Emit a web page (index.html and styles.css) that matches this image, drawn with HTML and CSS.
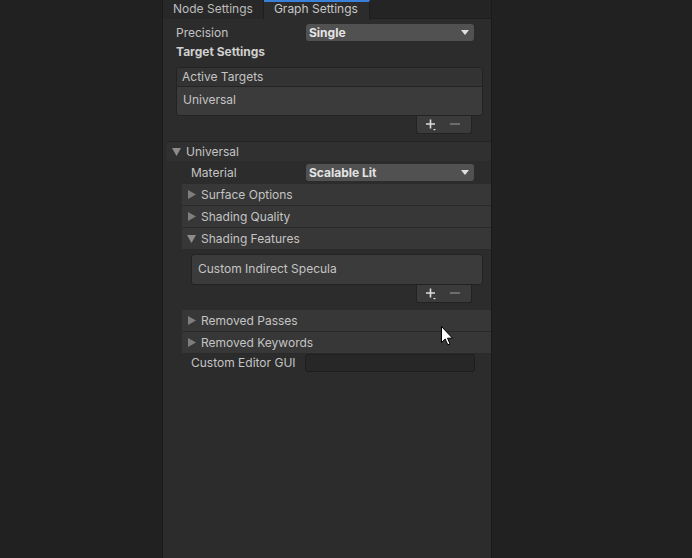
FILE: index.html
```html
<!DOCTYPE html>
<html>
<head>
<meta charset="utf-8">
<link rel="stylesheet" href="styles.css">
</head>
<body>
<div class="window">
  <div class="tabbar">
    <div class="tab">Node Settings</div>
    <div class="tab active">Graph Settings</div>
  </div>
  <div class="content">
    <div class="row">
      <div class="label">Precision</div>
      <div class="dropdown"><span>Single</span><svg class="arrow" width="8" height="5" viewBox="0 0 8 5"><path d="M0 0H8L4 5Z" fill="#e0e0e0"/></svg></div>
    </div>
    <div class="row heading">Target Settings</div>
    <div class="list">
      <div class="list-head">Active Targets</div>
      <div class="list-body">Universal</div>
    </div>
    <div class="list-foot">
      <svg width="12" height="12" viewBox="0 0 12 12"><path d="M4.5 0.5V9.5M0 5H9" stroke="#dcdcdc" stroke-width="1.6"/><path d="M7 10H10L8.5 11.5Z" fill="#dcdcdc"/></svg>
      <svg width="10" height="12" viewBox="0 0 10 12"><path d="M0 5H10" stroke="#7a7a7a" stroke-width="1.6"/></svg>
    </div>
  </div>
  <div class="section">
    <div class="section-head"><svg class="tri" width="9" height="8" viewBox="0 0 9 8"><path d="M0 0H9L4.5 8Z" fill="#8c8c8c"/></svg>Universal</div>
    <div class="section-body">
      <div class="row mat">
        <div class="label">Material</div>
        <div class="dropdown"><span>Scalable Lit</span><svg class="arrow" width="8" height="5" viewBox="0 0 8 5"><path d="M0 0H8L4 5Z" fill="#e0e0e0"/></svg></div>
      </div>
      <div class="fold"><svg class="tri" width="8" height="9" viewBox="0 0 8 9"><path d="M0 0V9L8 4.5Z" fill="#7e7e7e"/></svg>Surface Options</div>
      <div class="fold"><svg class="tri" width="8" height="9" viewBox="0 0 8 9"><path d="M0 0V9L8 4.5Z" fill="#7e7e7e"/></svg>Shading Quality</div>
      <div class="fold"><svg class="tri down" width="9" height="8" viewBox="0 0 9 8"><path d="M0 0H9L4.5 8Z" fill="#8c8c8c"/></svg>Shading Features</div>
      <div class="list list2">
        <div class="list-body">Custom Indirect Specula</div>
      </div>
      <div class="list-foot foot2">
        <svg width="12" height="12" viewBox="0 0 12 12"><path d="M4.5 0.5V9.5M0 5H9" stroke="#dcdcdc" stroke-width="1.6"/><path d="M7 10H10L8.5 11.5Z" fill="#dcdcdc"/></svg>
        <svg width="10" height="12" viewBox="0 0 10 12"><path d="M0 5H10" stroke="#7a7a7a" stroke-width="1.6"/></svg>
      </div>
      <div class="fold first"><svg class="tri" width="8" height="9" viewBox="0 0 8 9"><path d="M0 0V9L8 4.5Z" fill="#7e7e7e"/></svg>Removed Passes</div>
      <div class="fold"><svg class="tri" width="8" height="9" viewBox="0 0 8 9"><path d="M0 0V9L8 4.5Z" fill="#7e7e7e"/></svg>Removed Keywords</div>
      <div class="row gui">
        <div class="label">Custom Editor GUI</div>
        <div class="field"></div>
      </div>
    </div>
  </div>
</div>
<svg class="cursor" width="13" height="20" viewBox="0 0 13 20"><path d="M0.5 0.5V16.5L4.2 13L6.8 18.8L9 17.8L6.5 12.2H11.5Z" fill="#ffffff" stroke="#000000" stroke-width="1"/></svg>
</body>
</html>
```
FILE: styles.css
```css
html, body {
  margin: 0;
  padding: 0;
  background: #212121;
  font-family: Inter, "Noto Sans", sans-serif;
  font-size: 12px;
  color: #c4c4c4;
}
.window {
  margin-left: 162px;
  width: 328px;
  height: 558px;
  background: #2c2c2c;
  border-left: 1px solid #1a1a1a;
  border-right: 1px solid #1a1a1a;
  box-sizing: content-box;
}
.tabbar {
  display: flex;
  height: 19px;
  background: #242424;
  border-bottom: 1px solid #1e1e1e;
  box-sizing: border-box;
}
.tab {
  padding: 0 10px;
  height: 19px;
  line-height: 18px;
  background: #282828;
  color: #bdbdbd;
  border-right: 1px solid #1e1e1e;
}
.tab.active {
  background: #2c2c2c;
  color: #c8c8c8;
  border-top: 2px solid #3a7fd8;
  line-height: 14px;
  box-sizing: border-box;
  height: 20px;
  padding: 0 11px 0 10px;
}
.content {
  padding: 3px 8px 0 13px;
}
.row {
  display: flex;
  align-items: center;
  height: 20px;
}
.row .label {
  width: 130px;
  flex: none;
}
.dropdown {
  width: 168px;
  height: 17px;
  background: #515151;
  border-radius: 3px;
  display: flex;
  align-items: center;
  justify-content: space-between;
  padding: 0 5px 0 3px;
  box-sizing: border-box;
  font-weight: 700;
  color: #e4e4e4;
}
.dropdown .arrow {
  margin-top: 1px;
}
.heading {
  font-weight: 700;
  color: #d0d0d0;
  height: 18px;
}
.list {
  margin-top: 7px;
  border: 1px solid #222222;
  border-radius: 3px;
  overflow: hidden;
  background: #3b3b3b;
}
.list-head {
  height: 18px;
  line-height: 18px;
  padding-left: 5px;
  background: #333333;
  border-bottom: 1px solid #252525;
}
.list-body {
  height: 28px;
  line-height: 26px;
  padding-left: 6px;
}
.list-foot {
  margin-left: auto;
  margin-right: 11px;
  width: 56px;
  height: 18px;
  background: #3b3b3b;
  border: 1px solid #222222;
  border-top: none;
  border-radius: 0 0 3px 3px;
  box-sizing: border-box;
  display: flex;
  align-items: center;
  justify-content: flex-start;
  gap: 12px;
  padding-left: 9px;
}
.list-foot.foot2 {
  margin-right: 19px;
}
.section {
  margin-left: 4px;
  margin-top: 7px;
  border-top: 1px solid #232323;
}
.section-head {
  height: 19px;
  background: #303030;
  display: flex;
  align-items: center;
  padding-left: 5px;
}
.section-head .tri {
  margin-right: 5px;
}
.row.mat {
  padding-left: 24px;
  height: 22px;
  margin-bottom: 1px;
}
.row.mat .label {
  width: 115px;
}
.fold {
  margin-left: 15px;
  height: 21px;
  background: #373737;
  border-bottom: 1px solid #2a2a2a;
  display: flex;
  align-items: center;
  padding-left: 6px;
}
.fold .tri {
  margin-right: 5px;
}
.fold .tri.down {
  margin-left: -1px;
  margin-right: 5px;
}
.fold.first {
  margin-top: 7px;
}
.list2 {
  margin-top: 4px;
  margin-left: 24px;
  margin-right: 8px;
}
.list2 .list-body {
  height: 29px;
  line-height: 27px;
  padding-left: 6px;
}
.row.gui {
  padding-left: 24px;
  height: 18px;
}
.row.gui .label {
  width: 114px;
  margin-top: -2px;
}
.field {
  width: 170px;
  height: 18px;
  background: #272727;
  border: 1px solid #1d1d1d;
  border-radius: 3px;
  box-sizing: border-box;
}
.cursor {
  position: absolute;
  left: 441px;
  top: 326px;
}
```
